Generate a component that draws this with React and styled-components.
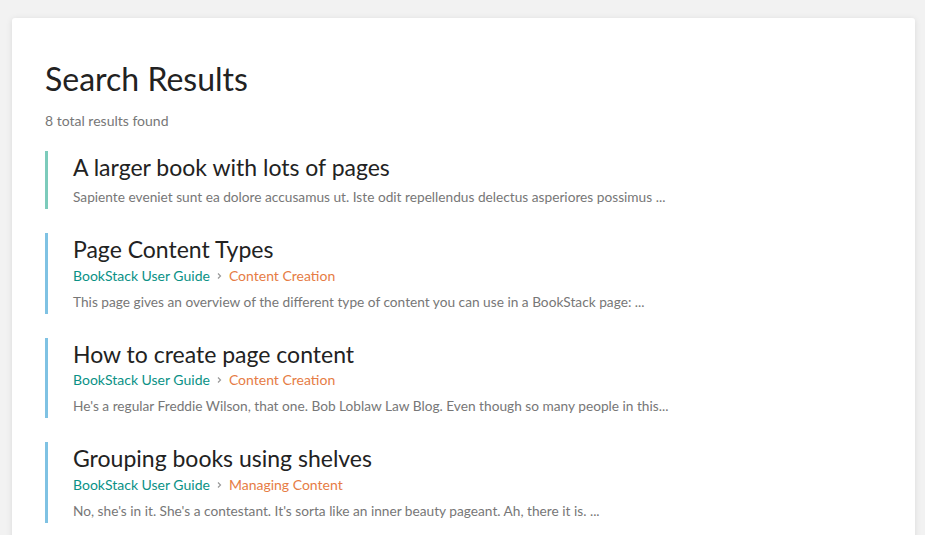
import React from "react";
import styled, { createGlobalStyle } from "styled-components";

const Global = createGlobalStyle`
  html, body { margin: 0; padding: 0; background: #f2f2f2; }
  body { font-family: Lato, "Open Sans", sans-serif; color: #222; }
`;

const Page = styled.div`
  padding: 18px 10px 0 12px;
  height: 535px;
  box-sizing: border-box;
  overflow: hidden;
`;

const Card = styled.main`
  background: #fff;
  border-radius: 3px;
  box-shadow: 0 1px 6px rgba(0, 0, 0, 0.1);
  padding: 42px 33px 24px;
  min-height: 600px;
  box-sizing: border-box;
`;

const Title = styled.h1`
  margin: 0;
  font-size: 32px;
  font-weight: 400;
  line-height: 1.2;
  color: #222;
`;

const Count = styled.div`
  margin-top: 12px;
  font-size: 14px;
  line-height: 1.5;
  color: #777;
`;

const List = styled.div`
  margin-top: 20px;
  display: flex;
  flex-direction: column;
  gap: 24px;
`;

const Entry = styled.a`
  display: block;
  border-left: 3px solid ${(p) => p.$bar};
  padding: 3px 0 2px 25px;
  text-decoration: none;
`;

const EntryTitle = styled.h4`
  margin: 0 0 2px;
  font-size: 23px;
  font-weight: 400;
  line-height: 1.2;
  color: #222;
`;

const Crumbs = styled.div`
  display: flex;
  align-items: center;
  gap: 6px;
  font-size: 14px;
  line-height: 20px;
`;

const Crumb = styled.span`
  color: ${(p) => p.$color};
`;

const Sep = styled.span`
  display: inline-flex;
  align-items: center;
`;

const Excerpt = styled.p`
  margin: ${(p) => (p.$afterCrumbs ? "5px" : "4px")} 0 0;
  font-size: 13.7px;
  line-height: 21px;
  color: #777;
`;

const BOOK = "#0a9186";
const CHAPTER = "#e67c45";

const results = [
  {
    title: "A larger book with lots of pages",
    bar: "#7ccbbb",
    excerpt:
      "Sapiente eveniet sunt ea dolore accusamus ut. Iste odit repellendus delectus asperiores possimus ...",
  },
  {
    title: "Page Content Types",
    bar: "#7fc2e3",
    book: "BookStack User Guide",
    chapter: "Content Creation",
    excerpt:
      "This page gives an overview of the different type of content you can use in a BookStack page: ...",
  },
  {
    title: "How to create page content",
    bar: "#7fc2e3",
    book: "BookStack User Guide",
    chapter: "Content Creation",
    excerpt:
      "He's a regular Freddie Wilson, that one. Bob Loblaw Law Blog. Even though so many people in this...",
  },
  {
    title: "Grouping books using shelves",
    bar: "#7fc2e3",
    book: "BookStack User Guide",
    chapter: "Managing Content",
    excerpt:
      "No, she's in it. She's a contestant. It's sorta like an inner beauty pageant. Ah, there it is. ...",
  },
];

const Chevron = () => (
  <svg width="7" height="8" viewBox="0 0 7 8" fill="none">
    <path d="M2 1.5 L4.5 4 L2 6.5" stroke="#999" strokeWidth="1.2" />
  </svg>
);

export default function App() {
  return (
    <>
      <Global />
      <Page>
        <Card>
          <Title>Search Results</Title>
          <Count>8 total results found</Count>
          <List>
            {results.map((r) => (
              <Entry key={r.title} $bar={r.bar} href="#">
                <EntryTitle>{r.title}</EntryTitle>
                {r.book && (
                  <Crumbs>
                    <Crumb $color={BOOK}>{r.book}</Crumb>
                    <Sep>
                      <Chevron />
                    </Sep>
                    <Crumb $color={CHAPTER}>{r.chapter}</Crumb>
                  </Crumbs>
                )}
                <Excerpt $afterCrumbs={!!r.book}>{r.excerpt}</Excerpt>
              </Entry>
            ))}
          </List>
        </Card>
      </Page>
    </>
  );
}
